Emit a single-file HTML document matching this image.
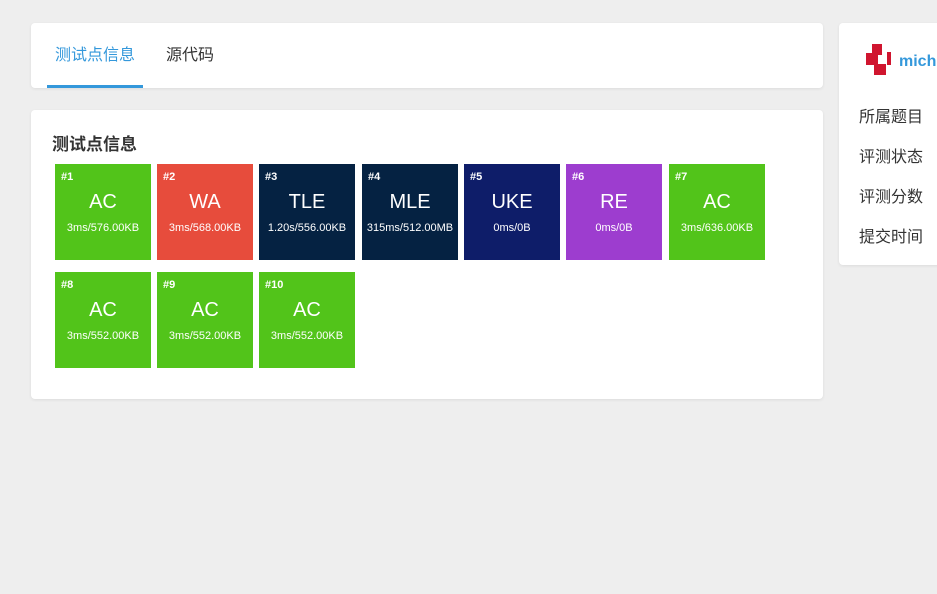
<!DOCTYPE html>
<html><head><meta charset="utf-8"><style>
body{margin:0;width:937px;height:594px;background:#eeeeee;font-family:"Liberation Sans","Noto Sans CJK SC",sans-serif;position:relative;overflow:hidden}
.card{position:absolute;background:#fff;border-radius:4px;box-shadow:0 1px 3px rgba(0,0,0,.08)}
.tab{position:absolute;top:23px;font-size:16px;line-height:20px}
.b{position:absolute;width:96px;height:96px;color:#fff;text-align:center}
.b .n{position:absolute;left:6px;top:7px;font-size:11px;font-weight:bold}
.b .s{position:absolute;left:0;right:0;top:27px;font-size:20px}
.b .m{position:absolute;left:0;right:0;top:58px;font-size:11px}
.g{background:#52c41a}.r{background:#e74c3c}.d{background:#052242}.u{background:#0e1d69}.p{background:#9d3dcf}
.it{position:absolute;left:20px;font-size:16px;color:#333}
</style></head><body>
<div class="card" style="left:31px;top:23px;width:792px;height:65px">
<div class="tab" style="left:24px;color:#3498db">测试点信息</div>
<div class="tab" style="left:135px;color:#333">源代码</div>
<div style="position:absolute;left:16px;top:62px;width:96px;height:3px;background:#3498db"></div>
</div>
<div class="card" style="left:31px;top:110px;width:792px;height:289px">
<div style="position:absolute;left:21px;top:20px;font-size:17px;font-weight:bold;color:#333">测试点信息</div>
</div>
<div class="b g" style="left:55px;top:164px"><span class="n">#1</span><div class="s">AC</div><div class="m">3ms/576.00KB</div></div>
<div class="b r" style="left:157px;top:164px"><span class="n">#2</span><div class="s">WA</div><div class="m">3ms/568.00KB</div></div>
<div class="b d" style="left:259px;top:164px"><span class="n">#3</span><div class="s">TLE</div><div class="m">1.20s/556.00KB</div></div>
<div class="b d" style="left:362px;top:164px"><span class="n">#4</span><div class="s">MLE</div><div class="m">315ms/512.00MB</div></div>
<div class="b u" style="left:464px;top:164px"><span class="n">#5</span><div class="s">UKE</div><div class="m">0ms/0B</div></div>
<div class="b p" style="left:566px;top:164px"><span class="n">#6</span><div class="s">RE</div><div class="m">0ms/0B</div></div>
<div class="b g" style="left:669px;top:164px"><span class="n">#7</span><div class="s">AC</div><div class="m">3ms/636.00KB</div></div>
<div class="b g" style="left:55px;top:272px"><span class="n">#8</span><div class="s">AC</div><div class="m">3ms/552.00KB</div></div>
<div class="b g" style="left:157px;top:272px"><span class="n">#9</span><div class="s">AC</div><div class="m">3ms/552.00KB</div></div>
<div class="b g" style="left:259px;top:272px"><span class="n">#10</span><div class="s">AC</div><div class="m">3ms/552.00KB</div></div>
<div class="card" style="left:839px;top:23px;width:110px;height:242px">
<div style="position:absolute;left:33px;top:21px;width:10px;height:11px;background:#d0152f"></div>
<div style="position:absolute;left:27px;top:30px;width:12px;height:12px;background:#d0152f"></div>
<div style="position:absolute;left:35px;top:41px;width:12px;height:11px;background:#d0152f"></div>
<div style="position:absolute;left:48px;top:29px;width:4px;height:13px;background:#d0152f"></div>
<div style="position:absolute;left:60px;top:30px;font-size:16px;font-weight:bold;color:#3498db">mich</div>
<div class="it" style="top:80px">所属题目</div>
<div class="it" style="top:120px">评测状态</div>
<div class="it" style="top:160px">评测分数</div>
<div class="it" style="top:200px">提交时间</div>
</div>
</body></html>
